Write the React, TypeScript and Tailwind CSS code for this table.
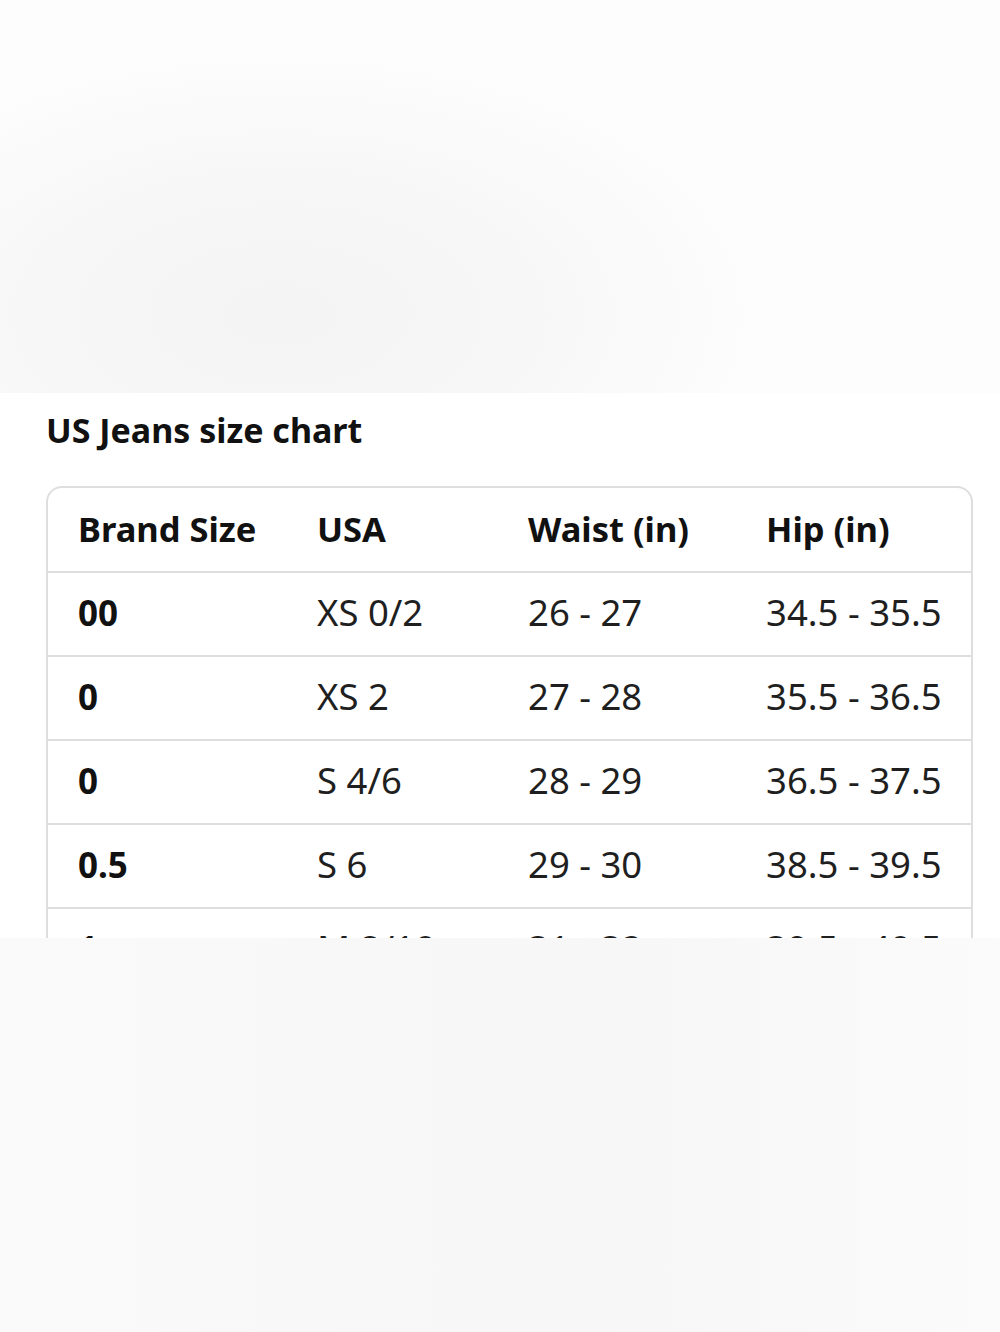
const rows = [
  { brand: "00", usa: "XS 0/2", waist: "26 - 27", hip: "34.5 - 35.5" },
  { brand: "0", usa: "XS 2", waist: "27 - 28", hip: "35.5 - 36.5" },
  { brand: "0", usa: "S 4/6", waist: "28 - 29", hip: "36.5 - 37.5" },
  { brand: "0.5", usa: "S 6", waist: "29 - 30", hip: "38.5 - 39.5" },
  { brand: "1", usa: "M 8/10", waist: "31 - 32", hip: "39.5 - 40.5" },
];

const cols = "grid grid-cols-[239px_211px_238px_1fr]";

export default function App() {
  return (
    <div className="w-[1000px] font-['Noto_Sans','Open_Sans',sans-serif]">
      <div className="h-[393px] bg-[radial-gradient(ellipse_50%_70%_at_28%_80%,#f4f4f5_0%,#f6f6f7_40%,#fafafa_75%,#fdfdfd_100%)]" />

      <div className="h-[545px] overflow-hidden bg-white">
        <h1 className="pl-[46px] pt-[15px] text-[34px] font-bold leading-[44px] text-[#111]">
          US Jeans size chart
        </h1>

        <div className="ml-[46px] mt-[34px] w-[927px] rounded-t-[16px] border-2 border-b-0 border-[#dedede]">
          <div className={`${cols} h-[83px] items-center text-[34.5px] font-bold leading-none text-[#111]`}>
            <div className="pl-[30px]">Brand Size</div>
            <div className="pl-[30px]">USA</div>
            <div className="pl-[30px]">Waist (in)</div>
            <div className="pl-[30px]">Hip (in)</div>
          </div>
          {rows.map((r, i) => (
            <div
              key={i}
              className={`${cols} h-[84px] items-center border-t-2 border-[#dedede] pb-[4px] text-[36.5px] leading-none text-[#1f1f1f]`}
            >
              <div className="pl-[30px] text-[35px] font-bold text-[#111]">{r.brand}</div>
              <div className="pl-[30px]">{r.usa}</div>
              <div className="pl-[30px]">{r.waist}</div>
              <div className="pl-[30px]">{r.hip}</div>
            </div>
          ))}
        </div>
      </div>

      <div className="h-[394px] bg-[linear-gradient(90deg,#fafafa_0%,#f8f8f9_30%,#f7f7f7_60%,#f9f9f9_85%,#fbfbfb_100%)]" />
    </div>
  );
}
